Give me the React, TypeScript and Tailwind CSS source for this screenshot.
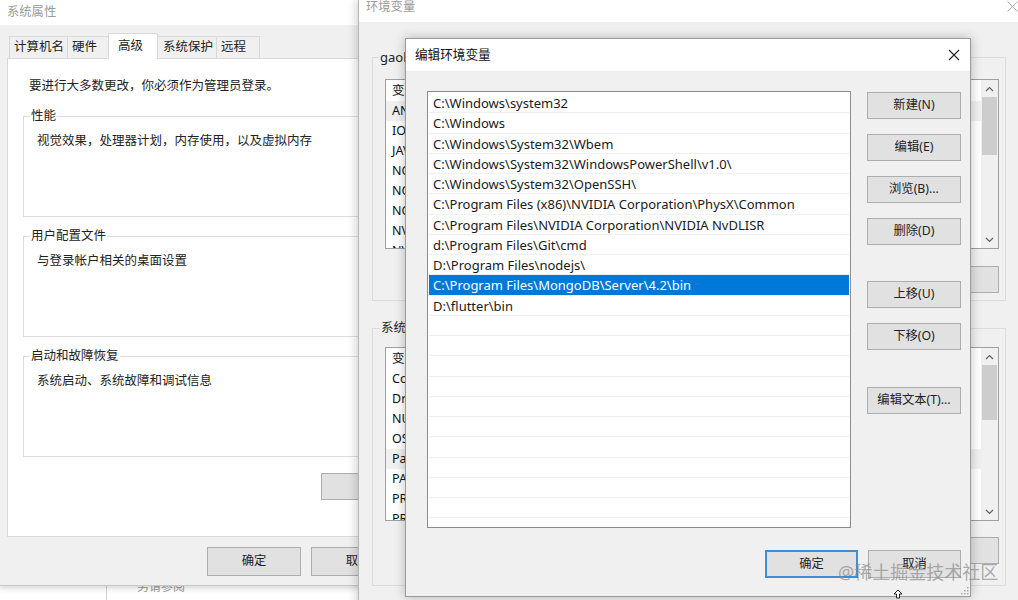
import React from 'react';

const FONT = "font-['Noto_Sans','Noto_Sans_CJK_SC',sans-serif]";

const PATHS = [
  'C:\\Windows\\system32',
  'C:\\Windows',
  'C:\\Windows\\System32\\Wbem',
  'C:\\Windows\\System32\\WindowsPowerShell\\v1.0\\',
  'C:\\Windows\\System32\\OpenSSH\\',
  'C:\\Program Files (x86)\\NVIDIA Corporation\\PhysX\\Common',
  'C:\\Program Files\\NVIDIA Corporation\\NVIDIA NvDLISR',
  'd:\\Program Files\\Git\\cmd',
  'D:\\Program Files\\nodejs\\',
  'C:\\Program Files\\MongoDB\\Server\\4.2\\bin',
  'D:\\flutter\\bin',
];

const USER_VARS = ['ANDROID_HOME', 'IOS_SDK', 'JAVA_HOME', 'NODE_PATH', 'NODE_HOME', 'NODE_GLOBAL', 'NVM_HOME', 'NVM_SYMLINK'];
const SYS_VARS = ['ComSpec', 'DriverData', 'NUMBER_OF_PROCESSORS', 'OS', 'Path', 'PATHEXT', 'PROCESSOR_ARCHITECTURE', 'PROCESSOR_IDENTIFIER'];

const Btn: React.FC<{ label: string; className?: string; primary?: boolean }> = ({ label, className = '', primary }) => (
  <div
    className={`h-[27px] flex items-center justify-center bg-[#e1e1e1] text-[12.3px] text-[#222] ${
      primary ? 'border-2 border-[#3c8fd6]' : 'border border-[#adadad]'
    } ${className}`}
  >
    {label}
  </div>
);

const Chevron: React.FC<{ up?: boolean }> = ({ up }) => (
  <svg width="9" height="6" viewBox="0 0 9 6" className="text-[#606060]">
    <path d={up ? 'M1 5 L4.5 1.5 L8 5' : 'M1 1 L4.5 4.5 L8 1'} fill="none" stroke="currentColor" strokeWidth="1.2" />
  </svg>
);

const Scrollbar: React.FC<{ thumbH: number }> = ({ thumbH }) => (
  <div className="w-[17px] bg-[#f0f0f0] flex flex-col">
    <div className="h-[17px] flex items-center justify-center">
      <Chevron up />
    </div>
    <div className="flex-1 flex flex-col px-[1px]">
      <div className="bg-[#cdcdcd]" style={{ height: thumbH }} />
    </div>
    <div className="h-[17px] flex items-center justify-center">
      <Chevron />
    </div>
  </div>
);

const VarList: React.FC<{ rows: string[]; hl: number; h: string; thumbH: number }> = ({ rows, hl, h, thumbH }) => (
  <div className={`flex border border-[#a0a0a0] bg-white ${h}`}>
    <div className="flex-1 overflow-hidden pt-[1px] text-[12.5px] text-[#111]">
      <div className="h-[20px] leading-[20px] pl-[6px] flex">
        <span className="w-[200px]">变量</span>
        <span>值</span>
      </div>
      {rows.map((r, i) => (
        <div key={i} className={`h-[20px] leading-[20px] pl-[6px] ${i === hl ? 'bg-[#f0f0f0]' : ''}`}>
          {r}
        </div>
      ))}
    </div>
    <Scrollbar thumbH={thumbH} />
  </div>
);

const GroupBox: React.FC<{ label: string; children?: React.ReactNode; className?: string }> = ({ label, children, className = '' }) => (
  <div className={`relative border border-[#dcdcdc] ${className}`}>
    <span className="absolute -top-[9px] left-[6px] bg-white px-[1px] leading-[16px] text-[12.5px] text-[#222]">{label}</span>
    {children}
  </div>
);

const Tab: React.FC<{ label: string; w: string }> = ({ label, w }) => (
  <div className={`h-[22px] ${w} pl-[4px] border border-b-0 border-l-0 border-[#d9d9d9] flex items-center`}>{label}</div>
);

const SystemProps: React.FC = () => (
  <div className="absolute left-0 top-0 w-[413px] h-[586px] bg-[#f0f0f0] border-b border-[#c8c8c8] shadow-[0_2px_6px_rgba(0,0,0,0.18)] flex flex-col">
    <div className="h-[25px] bg-white pl-[7px] flex items-center text-[12.3px] text-[#9b9b9b]">系统属性</div>
    <div className="pl-[7px] pr-[7px] flex flex-col">
      <div className="flex items-end h-[33px] text-[12.5px] text-[#222]">
        <div className="h-[22px] w-[59px] ml-[2px] pl-[4px] border border-b-0 border-[#d9d9d9] flex items-center">计算机名</div>
        <Tab label="硬件" w="w-[42px]" />
        <div className="h-[26px] w-[50px] -ml-[2px] bg-white border border-b-0 border-[#d9d9d9] flex items-start pt-[3px] pl-[9px] -mb-[1px] relative z-10">高级</div>
        <div className="h-[22px] w-[59px] pl-[5px] border border-b-0 border-l-0 border-[#d9d9d9] flex items-center">系统保护</div>
        <Tab label="远程" w="w-[43px]" />
      </div>
      <div className="h-[479px] bg-white border border-[#d9d9d9] pl-[15px] pr-[8px] flex flex-col text-[12.5px] text-[#222]">
        <div className="mt-[19px] ml-[6px] leading-[16px]">要进行大多数更改，你必须作为管理员登录。</div>
        <GroupBox label="性能" className="mt-[22px] h-[101px]">
          <div className="mt-[16px] ml-[13px] leading-[16px]">视觉效果，处理器计划，内存使用，以及虚拟内存</div>
        </GroupBox>
        <GroupBox label="用户配置文件" className="mt-[19px] h-[101px]">
          <div className="mt-[16px] ml-[13px] leading-[16px]">与登录帐户相关的桌面设置</div>
        </GroupBox>
        <GroupBox label="启动和故障恢复" className="mt-[19px] h-[101px]">
          <div className="mt-[16px] ml-[13px] leading-[16px]">系统启动、系统故障和调试信息</div>
        </GroupBox>
        <div className="mt-[16px] ml-[298px] w-[94px] h-[27px] bg-[#e1e1e1] border border-[#adadad]" />
      </div>
      <div className="flex mt-[10px] ml-[200px] gap-[10px]">
        <Btn label="确定" className="w-[94px] h-[29px]" />
        <Btn label="取消" className="w-[94px] h-[29px]" />
      </div>
    </div>
  </div>
);

const EnvVars: React.FC = () => (
  <div className="absolute left-[358px] top-0 w-[670px] h-[610px] bg-[#f0f0f0] border-l border-[#b4b4b4] shadow-[-3px_0_8px_rgba(0,0,0,0.15)] flex flex-col">
    <div className="h-[22px] bg-white pl-[7px] pr-[4px] flex items-start justify-between text-[12.3px] text-[#9b9b9b]">
      <span className="leading-[14px]">环境变量</span>
      <svg width="11" height="11" viewBox="0 0 11 11" className="mr-[6px] mt-[1px]">
        <path d="M0.5 0.5 L10.5 10.5 M10.5 0.5 L0.5 10.5" stroke="#b0b0b0" strokeWidth="1" />
      </svg>
    </div>
    <div className="pl-[13px] flex flex-col">
      <div className="relative mt-[35px] w-[634px] h-[244px] border border-[#dcdcdc]">
        <span className="absolute -top-[10px] left-[6px] bg-[#f0f0f0] px-[1px] leading-[18px] text-[13px] text-[#222]">gaolei 的用户变量(U)</span>
        <div className="ml-[12px] mt-[21px] w-[614px]">
          <VarList rows={USER_VARS} hl={0} h="h-[170px]" thumbH={58} />
        </div>
        <div className="flex justify-end mr-[6px] mt-[17px] gap-[10px]">
          <Btn label="新建(N)..." className="w-[94px] pr-[10px]" />
          <Btn label="编辑(E)..." className="w-[94px] pr-[10px]" />
          <Btn label="删除(D)" className="w-[94px] pr-[10px]" />
        </div>
      </div>
      <div className="relative mt-[27px] w-[634px] h-[258px] border border-[#dcdcdc]">
        <span className="absolute -top-[10px] left-[7px] bg-[#f0f0f0] px-[1px] leading-[18px] text-[12.5px] text-[#222]">系统变量(S)</span>
        <div className="ml-[12px] mt-[18px] w-[614px]">
          <VarList rows={SYS_VARS} hl={4} h="h-[174px]" thumbH={55} />
        </div>
        <div className="flex justify-end mr-[6px] mt-[16px] gap-[10px]">
          <Btn label="新建(W)..." className="w-[94px] pr-[10px]" />
          <Btn label="编辑(I)..." className="w-[94px] pr-[10px]" />
          <Btn label="删除(L)" className="w-[94px] pr-[10px]" />
        </div>
      </div>
    </div>
  </div>
);

const EditDialog: React.FC = () => (
  <div className="absolute left-[405px] top-[38px] w-[566px] h-[559px] bg-[#f0f0f0] border border-[#9a9a9a] shadow-[0_0_10px_rgba(0,0,0,0.25)] flex flex-col">
    <div className="h-[32px] bg-white pl-[9px] pr-[8px] flex items-center justify-between text-[12.6px] text-[#111]">
      <span>编辑环境变量</span>
      <svg width="12" height="12" viewBox="0 0 12 12" className="mr-[2px]">
        <path d="M1 1 L11 11 M11 1 L1 11" stroke="#222" strokeWidth="1.1" />
      </svg>
    </div>
    <div className="pl-[21px] pt-[20px] flex flex-col">
      <div className="flex">
        <div className="w-[424px] h-[437px] bg-white border border-[#8c8c8c] p-[1px] overflow-hidden text-[13px] text-[#1a1a1a]">
          {Array.from({ length: 21 }).map((_, i) => {
            const sel = i === 9;
            return (
              <div
                key={i}
                className={`h-[20.25px] leading-[20px] pl-[4px] border-b border-[#f0f0f0] whitespace-nowrap ${
                  sel ? 'bg-[#0078d7] text-white' : ''
                }`}
              >
                {PATHS[i] ?? ''}
              </div>
            );
          })}
        </div>
        <div className="ml-[16px] mt-[1px] w-[94px] flex flex-col">
          <Btn label="新建(N)" />
          <Btn label="编辑(E)" className="mt-[15px]" />
          <Btn label="浏览(B)..." className="mt-[15px]" />
          <Btn label="删除(D)" className="mt-[15px]" />
          <Btn label="上移(U)" className="mt-[36px]" />
          <Btn label="下移(O)" className="mt-[15px]" />
          <Btn label="编辑文本(T)..." className="mt-[37px]" />
        </div>
      </div>
      <div className="flex mt-[22px] ml-[338px] gap-[10px]">
        <Btn label="确定" primary className="w-[93px] h-[28px]" />
        <Btn label="取消" className="w-[93px] h-[28px]" />
      </div>
    </div>
    <svg width="10" height="10" viewBox="0 0 10 10" className="absolute right-[1px] bottom-[1px]">
      <g fill="#a8a8a8">
        <rect x="8" y="2" width="1.5" height="1.5" />
        <rect x="5" y="5" width="1.5" height="1.5" />
        <rect x="8" y="5" width="1.5" height="1.5" />
        <rect x="2" y="8" width="1.5" height="1.5" />
        <rect x="5" y="8" width="1.5" height="1.5" />
        <rect x="8" y="8" width="1.5" height="1.5" />
      </g>
    </svg>
  </div>
);

export default function App() {
  return (
    <div className={`relative w-[1018px] h-[600px] overflow-hidden bg-white ${FONT}`}>
      {/* desktop behind the windows */}
      <div className="absolute left-0 top-[572px] w-[1018px] h-[28px] flex">
        <div className="w-[107px] h-full bg-white border-r border-[#d0d0d0]" />
        <div className="pl-[30px] pt-[8px] text-[12px] text-[#9a9a9a] leading-[14px]">另请参阅</div>
      </div>
      <SystemProps />
      <EnvVars />
      <EditDialog />
      {/* cursor */}
      <svg width="12" height="10" viewBox="0 0 12 10" className="absolute left-[892px] top-[589px]">
        <path d="M6 1 L10 5 L7.5 5 L7.5 9 L4.5 9 L4.5 5 L2 5 Z" fill="white" stroke="#222" strokeWidth="1" />
      </svg>
      {/* watermark */}
      <div className="absolute left-[838px] top-[560px] text-[18px] leading-[24px] text-[#8a8a8a]/70 whitespace-nowrap pointer-events-none">
        @稀土掘金技术社区
      </div>
    </div>
  );
}
